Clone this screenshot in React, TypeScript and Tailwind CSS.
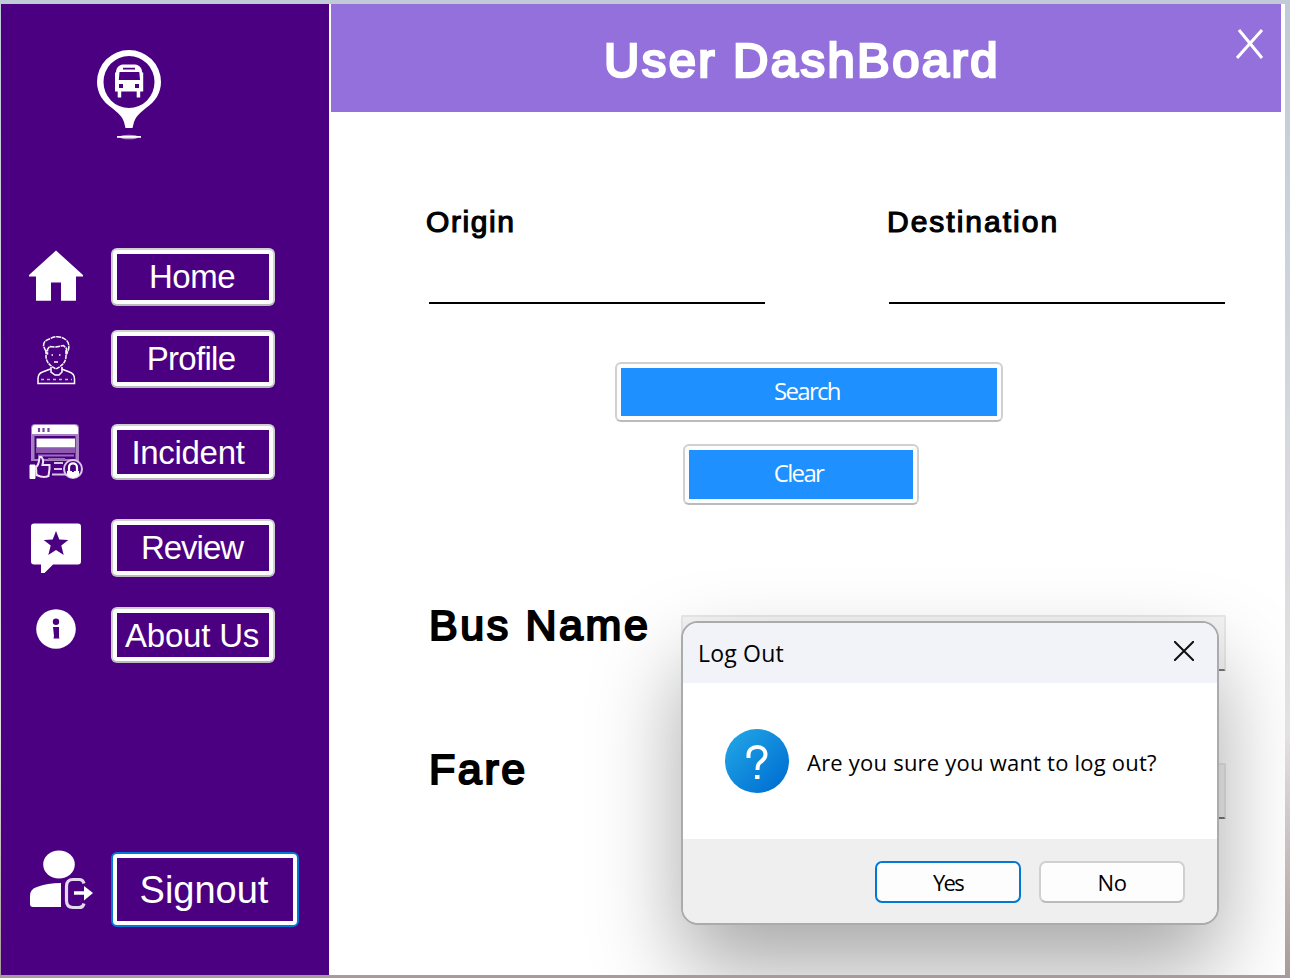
import React from "react";

type IconProps = { className?: string };

function BusPinLogo({ className }: IconProps) {
  return (
    <svg className={className} width="66" height="92" viewBox="96 49 66 92" fill="#fff">
      <path
        fillRule="evenodd"
        d="M129 50a32 32 0 0 1 32 32c0 11-6 20-15 26-6 5-10 8-12 14l-1.500 6h-7l-1.500-6c-2-6-6-9-12-14-9-6-15-15-15-26a32 32 0 0 1 32-32zm0 6a25.500 26 0 1 0 0 52 25.500 26 0 0 0 0-52z"
      />
      <path
        fillRule="evenodd"
        d="M123 64.500h12c5 .5 7 4 7.200 8h1v19h-3v6h-3.500v-6h-15.500v6h-3.500v-6h-2.700v-19h1c.2-4 2-7.500 7-8zM123 67.800v1.700h12v-1.700zM119.500 72l-.7 8h21.200l-.7-8zM119 84v4h4v-4zM135 84v4h4v-4z"
      />
      <ellipse cx="129" cy="137" rx="9" ry="2.300" fill="#b593ca" />
      <path d="M117 136h24v1.800h-24z" />
    </svg>
  );
}

function HomeIcon() {
  return (
    <svg width="56" height="54" viewBox="28 249 56 54" fill="#fff">
      <path d="M56 249.500 83 274v1.500H76V299.800H61V281.500H51V299.800H36V275.500H29V274z" />
    </svg>
  );
}

function ProfileIcon() {
  return (
    <svg width="42" height="52" viewBox="35 334 42 52" fill="none" stroke="#fff" strokeWidth="1.500">
      <path d="M43.500 345c0-5 3-6 7-7.500 5-3 11-2 15 1 3 2 4 6 3 10l-2 5v-6l-3-3c-5 1-8 2-14 1l-2 3v5l-2-4z" strokeDasharray="5 0.700" />
      <path d="M46 349v6c0 6 4 10 10 13 6-3 10-7 10-13v-6" strokeDasharray="4 0.700" />
      <path d="M51.500 354h1.500M59 354h1.500M54 361h4" />
      <path d="M51 366v5l4 3h4l3-3v-5" />
      <path d="M50.500 368l-8 3c-3 1-4.500 4-4.500 7v4.500h36.500v-4.500c0-3-2-6-5-7l-8-3" />
      <path d="M41 378.500h31" strokeDasharray="3 3" stroke="#c9b2d8" />
    </svg>
  );
}

function IncidentIcon() {
  return (
    <svg width="56" height="58" viewBox="28 423 56 58">
      <path d="M35 424h40q4 0 4 4v33H31v-33q0-4 4-4z" fill="#a680c1" />
      <path d="M35 425h39q4 0 4 4v5H32v-5q0-4 3-4z" fill="#fff" />
      <path d="M39 428v4M43.500 428v4M48.500 428v4" stroke="#7a43a1" strokeWidth="2.200" />
      <path d="M34.500 436h41v23h-41z" fill="#4b0082" />
      <path d="M36.500 438.500h38.500v9H36.500z" fill="#fff" />
      <path d="M36 448h39v5H36z" fill="#8b58ad" />
      <path d="M38 455.500h36M48 459h17" stroke="#9a6cba" strokeWidth="2" />
      <path d="M54 463h9M54 469h8M52 474.500h15" stroke="#d8c5e4" strokeWidth="2" />
      <path d="M30 465h5v13.500h-5z" fill="#fff" stroke="#fff" strokeWidth="1" />
      <path d="M36 467c3-2 3-5 3.500-10h2c2 3 2 4 1 8h7v4l-1 7c-4 2-8 1-12-1z" fill="#4b0082" stroke="#eee3f5" strokeWidth="2" />
      <circle cx="73" cy="469" r="9" fill="#4b0082" stroke="#dac8e6" strokeWidth="2" />
      <path d="M69 471v-3.500c0-5.500 8-5.500 8 0v3.500" fill="none" stroke="#fff" strokeWidth="2.200" />
      <path d="M67 471h12v4c-3 4-9 4-12 0z" fill="#fff" />
      <path d="M73 469v3" stroke="#4b0082" strokeWidth="2" />
    </svg>
  );
}

function ReviewIcon() {
  return (
    <svg width="54" height="54" viewBox="29 521 54 54" fill="#fff">
      <path d="M34 523.500h44q3 0 3 3v35q0 3-3 3H53l-8.500 8.500h-3.500v-8.500h-7q-3 0-3-3v-35q0-3 3-3z" />
      <path
        d="M56 531l3.300 8.400 9 .5-7 5.600 2.400 9.500-7.700-5-7.700 5 2.400-9.500-7-5.600 9-.5z"
        fill="#4b0082"
      />
    </svg>
  );
}

function InfoIcon() {
  return (
    <svg width="42" height="42" viewBox="35 608 42 42">
      <circle cx="56" cy="629" r="19.800" fill="#fff" />
      <circle cx="56" cy="621.800" r="3.200" fill="#4b0082" />
      <path d="M53 627h6v10l.5 1.500h-6l.5-2.500z" fill="#4b0082" />
    </svg>
  );
}

function SignoutIcon() {
  return (
    <svg width="66" height="62" viewBox="28 849 66 62" fill="#fff">
      <ellipse cx="59" cy="864.500" rx="15.800" ry="14" />
      <path d="M61 883v24H33q-3 0-3-3v-8q0-7 7-9 10-4 24-4z" />
      <path
        d="M84 883.500q-1-4-5-4h-6q-6.500 0-6.500 7v14q0 7 6.500 7h6q4 0 5-4"
        fill="none"
        stroke="#e5d8ee"
        strokeWidth="3.200"
      />
      <path d="M74 893h12" stroke="#fff" strokeWidth="3.500" />
      <path d="M84 886l9 7-9 7.500z" />
    </svg>
  );
}

type MenuRowProps = {
  icon: React.ReactNode;
  label: string;
  rowClass: string;
  textClass: string;
  iconClass?: string;
};

function MenuRow({ icon, label, rowClass, textClass, iconClass = "" }: MenuRowProps) {
  return (
    <div className={`flex ${rowClass}`}>
      <div className={`flex w-[110px] shrink-0 items-center justify-center ${iconClass}`}>{icon}</div>
      <button className="h-full w-[164px] rounded-[6px] border-2 border-[#d0d0d0] border-b-[#bbb] bg-[#fdfdfd] p-1">
        <span className="flex h-full items-center justify-center bg-[#4b0082] text-[33px] leading-none whitespace-nowrap text-white">
          <span className={textClass}>{label}</span>
        </span>
      </button>
    </div>
  );
}

function Sidebar() {
  return (
    <nav className="flex h-full w-[328px] shrink-0 flex-col bg-[#4b0082]">
      <div className="h-[244px] pt-[45px] pl-[95px]">
        <BusPinLogo />
      </div>
      <MenuRow icon={<HomeIcon />} label="Home" rowClass="h-[58px]" textClass="pr-0.5 pb-0.5 tracking-[-0.5px]" />
      <MenuRow icon={<ProfileIcon />} label="Profile" rowClass="mt-6 h-[58px]" textClass="pr-1 pb-0.5 tracking-[-0.7px]" iconClass="pt-1" />
      <MenuRow icon={<IncidentIcon />} label="Incident" rowClass="mt-9 h-[56px]" textClass="pr-2.5 tracking-[-0.3px]" />
      <MenuRow icon={<ReviewIcon />} label="Review" rowClass="mt-[39px] h-[58px]" textClass="pr-0.5 pb-0.5 tracking-[-1px]" />
      <MenuRow icon={<InfoIcon />} label="About Us" rowClass="mt-[30px] h-[56px]" textClass="pr-0.5 tracking-[-0.2px]" iconClass="pb-3" />
      <div className="mt-[189px] flex h-[75px]">
        <div className="w-[110px] shrink-0 pl-[27px]">
          <div className="-mt-[3px]">
            <SignoutIcon />
          </div>
        </div>
        <button className="h-full w-[188px] rounded-[6px] border-2 border-[#0078d4] bg-white p-1">
          <span className="flex h-full items-center justify-center bg-[#4b0082] pr-0.5 text-[38px] leading-none text-white">
            Signout
          </span>
        </button>
      </div>
    </nav>
  );
}

function Header() {
  return (
    <header className="flex h-[108px] w-[950px] shrink-0 justify-between bg-[#9370db] text-white">
      <h1 className="pt-[30px] pl-[273px] text-[49px] leading-[52px] tracking-[2.4px] whitespace-nowrap [-webkit-text-stroke:2.6px_#fff]">
        User DashBoard
      </h1>
      <svg className="mt-[25px] mr-[17px]" width="28" height="30" viewBox="0 0 28 30" stroke="#fff" strokeWidth="3" fill="none">
        <path d="M3 1 26 29M26 1 1 29" />
      </svg>
    </header>
  );
}

function Field({ label, labelClass }: { label: string; labelClass: string }) {
  return (
    <label className="flex h-[100px] w-[336px] flex-col border-b-2 border-black">
      <span className={`text-[30px] leading-[36px] [-webkit-text-stroke:1.2px_#000] ${labelClass}`}>{label}</span>
    </label>
  );
}

function BlueButton({ label, className, textClass }: { label: string; className: string; textClass: string }) {
  return (
    <button className={`rounded-[6px] border-2 border-[#d0d0d0] border-b-[#bbb] bg-[#fdfdfd] p-1 ${className}`}>
      <span className="flex h-full items-center justify-center bg-[#1e90ff] font-['Open_Sans',sans-serif] text-[24px] leading-none text-white">
        <span className={textClass}>{label}</span>
      </span>
    </button>
  );
}

function Result({ label, className, textClass }: { label: string; className: string; textClass: string }) {
  return (
    <div className={`flex h-[56px] ${className}`}>
      <span
        className={`w-[252px] shrink-0 text-[43px] leading-[44px] tracking-[2.6px] whitespace-nowrap [-webkit-text-stroke:2.1px_#000] ${textClass}`}
      >
        {label}
      </span>
      <div className="w-[545px] rounded-[2px] border-2 border-[#e8e8e8] border-b-[#777] bg-[#f4f4f4]" />
    </div>
  );
}

function LogoutDialog() {
  return (
    <div
      role="dialog"
      className="absolute top-[617px] left-[680px] flex h-[304px] w-[538px] flex-col overflow-hidden rounded-[17px] border-2 border-[#a9abad] bg-white font-['Open_Sans','Noto_Sans',sans-serif] text-black shadow-[0_44px_88px_rgba(0,0,0,0.34)]"
    >
      <div className="flex h-[60px] shrink-0 justify-between bg-[#f1f3f8] pt-4 pr-[23px] pl-[15px]">
        <span className="text-[23px] leading-7 tracking-[0.2px]">Log Out</span>
        <svg className="mt-0.5" width="20" height="20" viewBox="0 0 20 20" stroke="#111" strokeWidth="2">
          <path d="M0 0 20 20M20 0 0 20" />
        </svg>
      </div>
      <div className="flex h-[156px] shrink-0 items-center pl-[42px]">
        <svg width="64" height="64" viewBox="0 0 64 64">
          <defs>
            <linearGradient id="question" x1="0" y1="0" x2="1" y2="1">
              <stop offset="0.1" stopColor="#20a3e5" />
              <stop offset="0.9" stopColor="#006fd2" />
            </linearGradient>
          </defs>
          <circle cx="32" cy="32" r="32" fill="url(#question)" />
          <path d="M23.500 29v-3c0-5 3.500-8 8.500-8s8.500 3 8.500 7.500-3 6-5.500 8c-2 1.500-2.500 3-2.500 7.500" fill="none" stroke="#fff" strokeWidth="4" />
          <path d="M30 46h4.500v4H30z" fill="#fff" />
        </svg>
        <span className="mt-0.5 ml-[18px] text-[22px] leading-7 tracking-[0.22px] whitespace-nowrap">Are you sure you want to log out?</span>
      </div>
      <div className="flex flex-1 gap-[18px] bg-[#efefef] pt-[22px] pl-[192px] text-[22px] leading-none">
        <button className="h-[42px] w-[146px] rounded-[7px] border-2 border-[#0078d4] bg-[#fdfdfd] tracking-[-1.7px]">Yes</button>
        <button className="h-[42px] w-[146px] rounded-[7px] border-2 border-[#d0d0d0] border-b-[#bbb] bg-[#fdfdfd] tracking-[-0.3px]">No</button>
      </div>
    </div>
  );
}

export default function App() {
  return (
    <div className="h-[978px] w-[1290px] overflow-hidden bg-linear-to-b from-[#c0cbd7] via-[#e4e1e2] via-75% to-[#a99a9a] pt-1 pl-px font-['Liberation_Sans',Arial,sans-serif]">
      <div className="relative flex h-[971px] w-[1284px] gap-0.5 overflow-hidden bg-white text-black">
        <Sidebar />
        <main className="flex flex-1 flex-col">
          <Header />
          <section className="mt-[92px] flex gap-[124px] pl-[98px]">
            <Field label="Origin" labelClass="-ml-[3px] tracking-[1.6px]" />
            <Field label="Destination" labelClass="-ml-[2px] tracking-[2px]" />
          </section>
          <section className="mt-[58px] flex w-[972px] flex-col items-center gap-[22px] pr-[16px]">
            <BlueButton label="Search" className="h-[60px] w-[388px]" textClass="pr-1 pb-0.5 tracking-[-1.7px]" />
            <BlueButton label="Clear" className="mr-[16px] h-[61px] w-[236px]" textClass="pr-[5px] pb-[3px] tracking-[-1.7px]" />
          </section>
          <section className="pl-[98px]">
            <Result label="Bus Name" className="mt-[110px]" textClass="-mt-[12px]" />
            <Result label="Fare" className="mt-[92px]" textClass="-mt-[16px]" />
          </section>
        </main>
        <LogoutDialog />
      </div>
    </div>
  );
}
